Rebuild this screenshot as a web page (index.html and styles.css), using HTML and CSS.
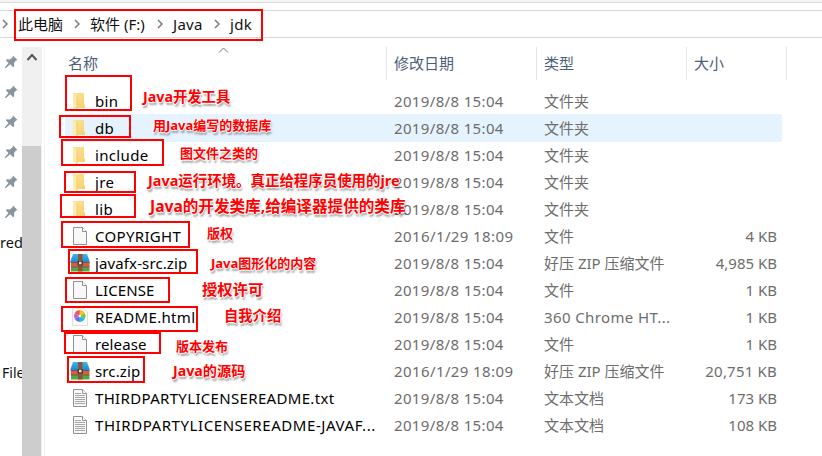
FILE: index.html
```html
<!DOCTYPE html>
<html lang="zh-CN">
<head>
<meta charset="utf-8">
<title>jdk</title>
<link rel="stylesheet" href="styles.css">
</head>
<body>
<svg class="defs" width="0" height="0">
  <defs>
    <linearGradient id="gold" x1="0" x2="1" y1="0" y2="1"><stop offset="0" stop-color="#ffe398"/><stop offset="1" stop-color="#f6d06c"/></linearGradient>
    <linearGradient id="blue" x1="0" x2="0" y1="0" y2="1"><stop offset="0" stop-color="#3fb4ee"/><stop offset="1" stop-color="#1687cc"/></linearGradient>
    <symbol id="folder" viewBox="0 0 20 20">
      <path d="M3 2h11v11.500h1v3.500H3z" fill="url(#gold)"/>
      <path d="M3 2.200l4 2v14.600l-4-2z" fill="#ffe9ad"/>
      <path d="M7 4.200v14.600" stroke="#edc65d" stroke-width=".8"/>
    </symbol>
    <symbol id="file" viewBox="0 0 20 20">
      <path d="M3.500 1.500h9l4 4v13h-13z" fill="#f8f8f8" stroke="#919191"/>
      <path d="M12.500 1.500v4h4" fill="#fff" stroke="#919191"/>
    </symbol>
    <symbol id="text" viewBox="0 0 20 20">
      <use href="#file"/>
      <path d="M5 5.500h6M5 7.500h10M5 9.500h10M5 11.500h10M5 13.500h10M5 15.500h10" stroke="#a4a4a4"/>
    </symbol>
    <symbol id="zip" viewBox="0 0 20 20">
      <path d="M3 1h14l2.500 7v2H.5V8z" fill="url(#blue)"/>
      <path d="M1 9.500h18.500v4.500H1z" fill="#e5573d"/>
      <path d="M1 14h18.500v4.500H1z" fill="#55a83f"/>
      <path d="M1 9.500h18.500M1 14h18.500" stroke="#34516a" stroke-width=".6"/>
      <path d="M8 1h4.500v17.500H8z" fill="#8b5536"/>
      <path d="M7.500 8h5.500v4.500H7.500z" fill="#533a2d"/>
      <path d="M9 8.800h2.500v2.500H9z" fill="#e6ded6"/>
    </symbol>
    <symbol id="html" viewBox="0 0 20 20">
      <path d="M2.500 1h11l4 4v13.500h-15z" fill="#fafafa" stroke="#dedede"/>
      <g transform="translate(9.800 9)">
        <path d="M0 0L-5 -3A6 6 0 0 1 0 -6z" fill="#f0524a"/>
        <path d="M0 0V-6A6 6 0 0 1 5 -3z" fill="#ffc020"/>
        <path d="M0 0L5 -3A6 6 0 0 1 5 3z" fill="#76ca35"/>
        <path d="M0 0L5 3A6 6 0 0 1 0 6z" fill="#20b9ec"/>
        <path d="M0 0V6A6 6 0 0 1 -5 3z" fill="#4f74f0"/>
        <path d="M0 0L-5 3A6 6 0 0 1 -5 -3z" fill="#d654d8"/>
        <circle r="1.200" fill="#fff"/>
      </g>
    </symbol>
    <symbol id="pin" viewBox="0 0 14 14">
      <path d="M9 .5L13.500 5l-1.500.6-2 2.400.2 3.200-1 1-3-3L1.500 13.300l-.8-.8L4.500 8 1.800 5.300l1-1 3.200.1 2.500-2.200z" fill="#8795a1"/>
    </symbol>
    <symbol id="sep" viewBox="0 0 6 10"><path d="M1 1l4 4-4 4" fill="none" stroke="#777" stroke-width="1.500"/></symbol>
  </defs>
</svg>
<div class="window">
  <div class="ribbon"></div>
  <nav class="address">
    <svg class="sep first"><use href="#sep"/></svg>
    <span class="crumb pc">此电脑</span><svg class="sep"><use href="#sep"/></svg>
    <span class="crumb drive">软件 (F:)</span><svg class="sep"><use href="#sep"/></svg>
    <span class="crumb java">Java</span><svg class="sep"><use href="#sep"/></svg>
    <span class="crumb last">jdk</span>
  </nav>
  <div class="main">
    <aside class="quick">
      <div class="q"><svg class="pin"><use href="#pin"/></svg></div>
      <div class="q"><svg class="pin"><use href="#pin"/></svg></div>
      <div class="q"><svg class="pin"><use href="#pin"/></svg></div>
      <div class="q"><svg class="pin"><use href="#pin"/></svg></div>
      <div class="q"><svg class="pin"><use href="#pin"/></svg></div>
      <div class="q"><svg class="pin"><use href="#pin"/></svg></div>
      <div class="q shared">red</div>
      <div class="q gap"></div>
      <div class="q files">File</div>
    </aside>
    <div class="scroll"><svg class="up" viewBox="0 0 12 8"><path d="M1.500 7L6 2l4.500 5" fill="none" stroke="#555" stroke-width="2"/></svg><div class="thumb"></div></div>
    <section class="list">
      <header class="head">
        <div class="h name">名称<svg class="sort" viewBox="0 0 10 6"><path d="M.5 5.500L5 1l4.500 4.500" fill="none" stroke="#777"/></svg></div>
        <div class="h">修改日期</div><div class="h">类型</div><div class="h">大小</div>
      </header>
      <div class="row"><svg class="ico"><use href="#folder"/></svg><span class="n">bin</span><span class="d">2019/8/8 15:04</span><span class="t">文件夹</span><span class="s"></span></div>
      <div class="row hover"><svg class="ico"><use href="#folder"/></svg><span class="n">db</span><span class="d">2019/8/8 15:04</span><span class="t">文件夹</span><span class="s"></span></div>
      <div class="row"><svg class="ico"><use href="#folder"/></svg><span class="n">include</span><span class="d">2019/8/8 15:04</span><span class="t">文件夹</span><span class="s"></span></div>
      <div class="row"><svg class="ico"><use href="#folder"/></svg><span class="n">jre</span><span class="d">2019/8/8 15:04</span><span class="t">文件夹</span><span class="s"></span></div>
      <div class="row"><svg class="ico"><use href="#folder"/></svg><span class="n">lib</span><span class="d">2019/8/8 15:04</span><span class="t">文件夹</span><span class="s"></span></div>
      <div class="row"><svg class="ico"><use href="#file"/></svg><span class="n">COPYRIGHT</span><span class="d long">2016/1/29 18:09</span><span class="t">文件</span><span class="s">4 KB</span></div>
      <div class="row"><svg class="ico"><use href="#zip"/></svg><span class="n tight">javafx-src.zip</span><span class="d">2019/8/8 15:04</span><span class="t">好压 ZIP 压缩文件</span><span class="s">4,985 KB</span></div>
      <div class="row"><svg class="ico"><use href="#file"/></svg><span class="n tight">LICENSE</span><span class="d">2019/8/8 15:04</span><span class="t">文件</span><span class="s">1 KB</span></div>
      <div class="row"><svg class="ico"><use href="#html"/></svg><span class="n">README.html</span><span class="d">2019/8/8 15:04</span><span class="t chrome">360 Chrome HT...</span><span class="s">1 KB</span></div>
      <div class="row"><svg class="ico"><use href="#file"/></svg><span class="n tight">release</span><span class="d">2019/8/8 15:04</span><span class="t">文件</span><span class="s">1 KB</span></div>
      <div class="row"><svg class="ico"><use href="#zip"/></svg><span class="n tight">src.zip</span><span class="d long">2016/1/29 18:09</span><span class="t">好压 ZIP 压缩文件</span><span class="s wide-size">20,751 KB</span></div>
      <div class="row"><svg class="ico"><use href="#text"/></svg><span class="n">THIRDPARTYLICENSEREADME.txt</span><span class="d">2019/8/8 15:04</span><span class="t">文本文档</span><span class="s">173 KB</span></div>
      <div class="row"><svg class="ico"><use href="#text"/></svg><span class="n wide">THIRDPARTYLICENSEREADME-JAVAF...</span><span class="d">2019/8/8 15:04</span><span class="t">文本文档</span><span class="s">108 KB</span></div>
    </section>
  </div>
  <i class="box b-path"></i><i class="box b-bin"></i><i class="box b-db"></i><i class="box b-include"></i><i class="box b-jre"></i><i class="box b-lib"></i><i class="box b-copy"></i><i class="box b-fx"></i><i class="box b-license"></i><i class="box b-readme"></i><i class="box b-release"></i><i class="box b-src"></i>
  <b class="note n-bin">Java开发工具</b>
  <b class="note n-db">用Java编写的数据库</b>
  <b class="note n-include">图文件之类的</b>
  <b class="note n-jre">Java运行环境。真正给程序员使用的jre</b>
  <b class="note n-lib">Java的开发类库,给编译器提供的类库</b>
  <b class="note n-copy">版权</b>
  <b class="note n-fx">Java图形化的内容</b>
  <b class="note n-license">授权许可</b>
  <b class="note n-readme">自我介绍</b>
  <b class="note n-release">版本发布</b>
  <b class="note n-src">Java的源码</b>
</div>
</body>
</html>
```
FILE: styles.css
```css
* { box-sizing: border-box; }
body { margin: 0; background: #fff; font: 15px/27px "Noto Sans", "Noto Sans CJK SC", sans-serif; color: #111; }
.defs { position: absolute; }
.window { position: relative; width: 822px; height: 456px; overflow: hidden; white-space: nowrap; }
.ribbon { height: 3px; background: #f5f6f7; border-bottom: 1px solid #d9dadb; }
.address { margin-top: 7px; height: 28px; border: solid #d9d9d9; border-width: 1px 0; display: flex; align-items: center; line-height: 24px; padding-bottom: 1px; }
.sep { width: 6px; height: 10px; flex: none; }
.first { margin: 0 10px 0 2px; }
.crumb { flex: none; }
.pc { width: 56px; }
.drive { width: 67px; margin-left: 10px; }
.java { width: 41px; margin-left: 10px; letter-spacing: .3px; }
.last { margin-left: 10px; letter-spacing: .3px; }
.main { display: flex; height: 418px; padding-top: 9px; }
.quick { width: 22px; overflow: hidden; }
.q { height: 30px; display: flex; align-items: center; padding-left: 4px; }
.pin { width: 14px; height: 14px; flex: none; }
.shared { padding-left: 0; font-size: 14.500px; }
.gap { height: 100px; }
.files { padding-left: 2px; font-size: 14px; }
.scroll { width: 20px; background: #f0f0f0; display: flex; flex-direction: column; flex: none; }
.up { width: 12px; height: 8px; margin: 6px 0 85px 4px; flex: none; }
.thumb { flex: 1; background: #cdcdcd; width: 19px; }
.list { margin-left: 2px; border-left: 1px solid #f2f2f2; flex: 1; padding-left: 20px; }
.head { display: grid; grid-template-columns: 322px 150px 150px 100px; height: 32px; margin-bottom: 8px; color: #4c607a; line-height: 33px; }
.h { border-right: 1px solid #e4e4e4; padding-left: 7px; }
.name { padding-left: 3px; position: relative; }
.sort { position: absolute; left: 153px; top: 0; width: 11px; height: 6px; }
.row { display: grid; grid-template-columns: 30px 299px 150px 140px 93px; height: 27px; width: 717px; align-items: start; color: #6d6d6d; line-height: 29px; }
.hover { background: #e5f3ff; box-shadow: 0 1px #e5f3ff; }
.ico { width: 20px; height: 20px; margin: 4px 0 0 5px; }
.n { color: #000; letter-spacing: .33px; }
.tight { letter-spacing: .12px; }
.wide { letter-spacing: .57px; }
.d { letter-spacing: .35px; }
.long { letter-spacing: .4px; }
.chrome { letter-spacing: .38px; }
.s { text-align: right; }
.wide-size { letter-spacing: .2px; }
.box { position: absolute; border: 2px solid #f00; }
.b-path { left: 14px; top: 9px; width: 249px; height: 32px; }
.b-bin { left: 65px; top: 75px; width: 67px; height: 36px; }
.b-db { left: 59px; top: 115px; width: 72px; height: 23px; }
.b-include { left: 61px; top: 139px; width: 103px; height: 27px; }
.b-jre { left: 64px; top: 171px; width: 72px; height: 22px; }
.b-lib { left: 60px; top: 194px; width: 76px; height: 24px; }
.b-copy { left: 61px; top: 221px; width: 129px; height: 27px; }
.b-fx { left: 68px; top: 249px; width: 130px; height: 25px; }
.b-license { left: 65px; top: 277px; width: 105px; height: 26px; }
.b-readme { left: 61px; top: 306px; width: 137px; height: 26px; }
.b-release { left: 64px; top: 332px; width: 97px; height: 22px; }
.b-src { left: 67px; top: 356px; width: 78px; height: 27px; }
.note { position: absolute; color: #f00; font-size: 13px; line-height: 20px; text-shadow: 0 0 1px #fff, 1px 0 1px #fff, -1px 0 1px #fff, 0 1px 1px #fff, 1px 3px 2px rgba(0,0,0,.4); }
.n-bin { left: 143px; top: 87px; font-size: 14.3px; }
.n-db { left: 153px; top: 115px; }
.n-include { left: 180px; top: 143px; }
.n-jre { left: 148px; top: 171px; font-size: 14.45px; }
.n-lib { left: 150px; top: 196px; font-size: 15.6px; }
.n-copy { left: 207px; top: 223px; }
.n-fx { left: 211px; top: 253px; }
.n-license { left: 202px; top: 279px; font-size: 15.3px; }
.n-readme { left: 224px; top: 306px; font-size: 14.3px; }
.n-release { left: 176px; top: 336px; }
.n-src { left: 173px; top: 361px; font-size: 14.2px; }
```
